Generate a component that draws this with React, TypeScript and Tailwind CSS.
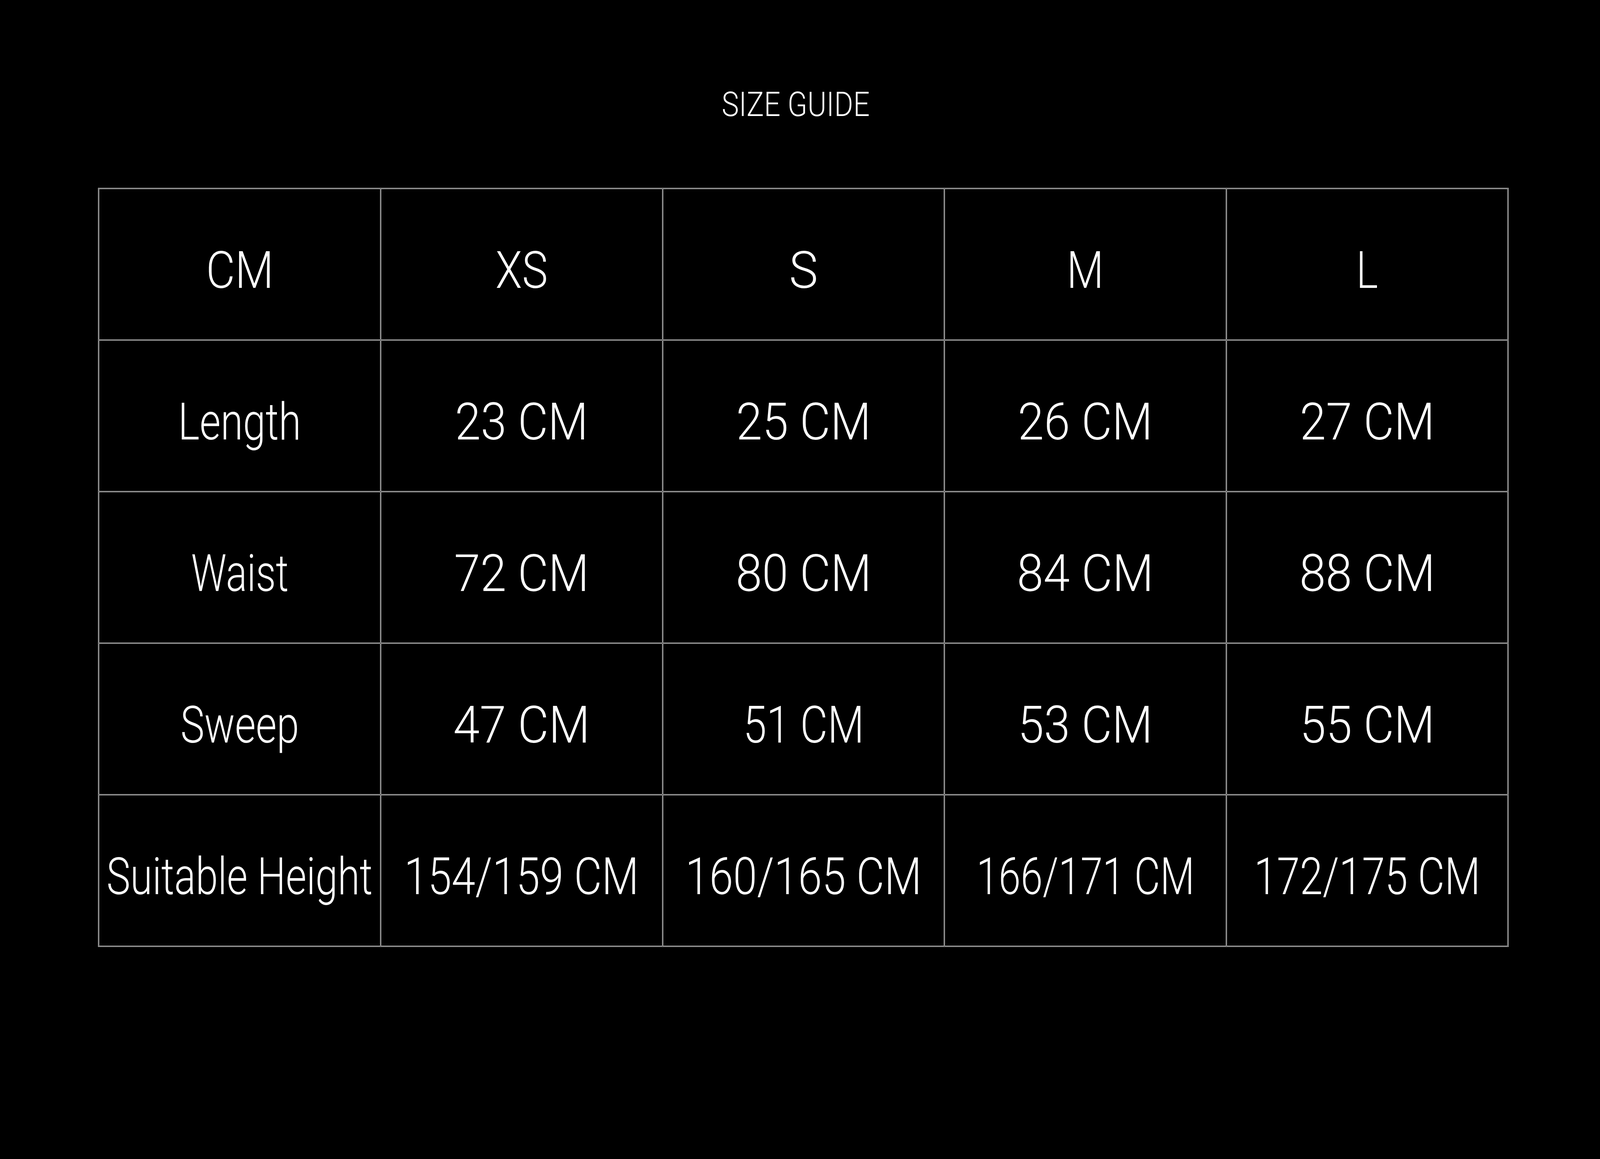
import { useEffect, useState } from "react";

// design width of the reference frame; text is stretched relative to it
const FRAME = 6959;

const header = [
  { text: "CM", fit: 1.47 },
  { text: "XS", fit: 1.43 },
  { text: "S", fit: 1.6 },
  { text: "M", fit: 1.41 },
  { text: "L", fit: 1.36 },
];

const rows = [
  [
    { text: "Length", fit: 1.34 },
    { text: "23 CM", fit: 1.53 },
    { text: "25 CM", fit: 1.55 },
    { text: "26 CM", fit: 1.55 },
    { text: "27 CM", fit: 1.55 },
  ],
  [
    { text: "Waist", fit: 1.3 },
    { text: "72 CM", fit: 1.55 },
    { text: "80 CM", fit: 1.56 },
    { text: "84 CM", fit: 1.57 },
    { text: "88 CM", fit: 1.56 },
  ],
  [
    { text: "Sweep", fit: 1.33 },
    { text: "47 CM", fit: 1.57 },
    { text: "51 CM", fit: 1.39 },
    { text: "53 CM", fit: 1.55 },
    { text: "55 CM", fit: 1.55 },
  ],
  [
    { text: "Suitable Height", fit: 1.32 },
    { text: "154/159 CM", fit: 1.41 },
    { text: "160/165 CM", fit: 1.42 },
    { text: "166/171 CM", fit: 1.31 },
    { text: "172/175 CM", fit: 1.36 },
  ],
];

const useFrameRatio = () => {
  const read = () => document.documentElement.clientWidth / FRAME;
  const [k, setK] = useState(read);
  useEffect(() => {
    const onResize = () => setK(read());
    window.addEventListener("resize", onResize);
    return () => window.removeEventListener("resize", onResize);
  }, []);
  return k;
};

const Cell = ({ text, fit, k }: { text: string; fit: number; k: number }) => (
  <div className="flex h-[387px] items-center justify-center border border-white pt-[30px]">
    <span
      className="block whitespace-nowrap text-[132px] leading-none font-light"
      style={{ scale: `${fit * k} 1` }}
    >
      {text}
    </span>
  </div>
);

export default function App() {
  const k = useFrameRatio();

  return (
    <div className="min-h-screen overflow-hidden bg-black pt-[224px] text-white font-['Roboto','Liberation_Sans',sans-serif]">
      <div className="flex justify-center pr-[0.546%]">
        <h1
          className="block whitespace-nowrap text-[87px] leading-none font-light"
          style={{ scale: `${1.45 * k} 1` }}
        >
          SIZE GUIDE
        </h1>
      </div>

      <div className="ml-[6.136%] mt-[170px] w-[88.16%] border border-white p-[1px]">
        <div className="grid grid-cols-5 gap-[1px]">
          {header.map((cell) => (
            <Cell key={cell.text} {...cell} k={k} />
          ))}
          {rows.map((row) =>
            row.map((cell, i) => <Cell key={row[0].text + i} {...cell} k={k} />)
          )}
        </div>
      </div>
    </div>
  );
}
